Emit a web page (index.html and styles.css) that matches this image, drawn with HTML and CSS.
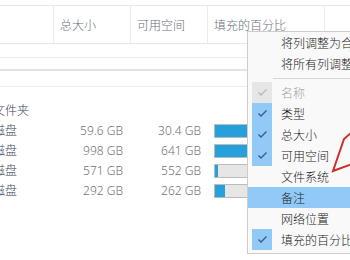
FILE: index.html
```html
<!DOCTYPE html>
<html>
<head>
<meta charset="utf-8">
<link rel="stylesheet" href="styles.css">
</head>
<body>
<div class="page">
  <div class="table">
    <div class="hdr">
      <div class="hc">类型</div>
      <div class="hc">总大小</div>
      <div class="hc">可用空间</div>
      <div class="hc">填充的百分比</div>
      <div class="hc last"></div>
    </div>
    <div class="gap g1"></div>
    <div class="gap g2"></div>
    <div class="gap g3"></div>
    <div class="rows">
      <div class="row"><span class="name">系统文件夹</span><span></span><span></span><span></span></div>
      <div class="row"><span class="name">本地磁盘</span><span class="num">59.6 GB</span><span class="num n2">30.4 GB</span><span class="barcell"><span class="bar"><span class="fill" style="width:94%"></span></span></span></div>
      <div class="row"><span class="name">本地磁盘</span><span class="num">998 GB</span><span class="num n2">641 GB</span><span class="barcell"><span class="bar"><span class="fill" style="width:94%"></span></span></span></div>
      <div class="row"><span class="name">本地磁盘</span><span class="num">571 GB</span><span class="num n2">552 GB</span><span class="barcell"><span class="bar"><span class="fill" style="width:3%"></span></span></span></div>
      <div class="row"><span class="name">本地磁盘</span><span class="num">292 GB</span><span class="num n2">262 GB</span><span class="barcell"><span class="bar"><span class="fill" style="width:10%"></span></span></span></div>
    </div>
  </div>

  <div class="menu">
    <div class="mi"><span class="ck none"></span><span class="mt">将列调整为合适的大小</span></div>
    <div class="mi"><span class="ck none"></span><span class="mt">将所有列调整为合适的大小</span></div>
    <div class="sep"></div>
    <div class="mi dis"><span class="ck gray"><svg width="11" height="9" viewBox="0 0 11 9"><polyline points="1.5,4.5 4,7 9.5,1.5"/></svg></span><span class="mt">名称</span></div>
    <div class="mi"><span class="ck on"><svg width="11" height="9" viewBox="0 0 11 9"><polyline points="1.5,4.5 4,7 9.5,1.5"/></svg></span><span class="mt">类型</span></div>
    <div class="mi"><span class="ck on"><svg width="11" height="9" viewBox="0 0 11 9"><polyline points="1.5,4.5 4,7 9.5,1.5"/></svg></span><span class="mt">总大小</span></div>
    <div class="mi"><span class="ck on"><svg width="11" height="9" viewBox="0 0 11 9"><polyline points="1.5,4.5 4,7 9.5,1.5"/></svg></span><span class="mt">可用空间</span></div>
    <div class="mi"><span class="ck none"></span><span class="mt">文件系统</span></div>
    <div class="mi hl"><span class="ck none"></span><span class="mt">备注</span></div>
    <div class="mi"><span class="ck none"></span><span class="mt">网络位置</span></div>
    <div class="mi"><span class="ck on"><svg width="11" height="9" viewBox="0 0 11 9"><polyline points="1.5,4.5 4,7 9.5,1.5"/></svg></span><span class="mt">填充的百分比</span></div>
  </div>

  <svg class="arrow" width="350" height="260" viewBox="0 0 350 260">
    <polyline points="352,132 344,139 333,171 352,164"/>
  </svg>
</div>
</body>
</html>
```

FILE: styles.css
```css
html, body {
  margin: 0;
  padding: 0;
  background: #ffffff;
  overflow: hidden;
}
.page {
  position: relative;
  width: 350px;
  height: 260px;
  overflow: hidden;
  font-family: "Noto Sans", "Noto Sans CJK SC", sans-serif;
  font-size: 12px;
  font-weight: 300;
}
.table {
  margin-left: -31px;
  width: 381px;
}
.hdr {
  margin-top: 5px;
  height: 37px;
  border-top: 1px solid #e8e8e8;
  border-bottom: 1px solid #e4e7ea;
  display: grid;
  grid-template-columns: 85px 77px 77px 117px 1fr;
}
.hc {
  border-right: 1px solid #ececec;
  padding-left: 6px;
  padding-top: 2px;
  line-height: 35px;
  color: #6a6f78;
  white-space: nowrap;
  overflow: hidden;
}
.hc.last { border-right: none; }
.gap { border-bottom: 1px solid #ebebeb; }
.g1 { height: 13px; }
.g2 { height: 11px; border-bottom: 2px solid #dfe4e8; }
.g3 { height: 15px; border-bottom: 1px solid #eeeeee; }
.rows { margin-top: 14px; }
.row {
  display: grid;
  grid-template-columns: 85px 77px 77px 117px;
  height: 20px;
  line-height: 20px;
  align-items: center;
}
.name {
  color: #3a4458;
  white-space: nowrap;
  overflow: hidden;
}
.num {
  text-align: right;
  padding-right: 8px;
  color: #727272;
}
.num.n2 { padding-right: 7px; }
.barcell {
  padding-left: 6px;
  display: flex;
  align-items: center;
  height: 20px;
}
.bar {
  display: block;
  width: 103px;
  height: 12px;
  border: 1px solid #bcbcbc;
  background: #e6e6e6;
}
.fill {
  display: block;
  height: 100%;
  background: #26a0da;
}

.menu {
  position: absolute;
  left: 247px;
  top: 31px;
  width: 120px;
  background: #f9f9f9;
  border: 1px solid #cdcdcd;
  padding-bottom: 3px;
  color: #1a1a1a;
}
.mi {
  height: 21px;
  display: flex;
  align-items: center;
  white-space: nowrap;
}
.mi.hl { background: #91c9f7; }
.ck {
  width: 20px;
  height: 21px;
  margin-left: 4px;
  display: flex;
  align-items: center;
  justify-content: center;
  flex: none;
}
.ck.on { background: #91c9f7; }
.ck.gray { background: #e6e6e6; }
.ck svg polyline {
  fill: none;
  stroke: #3a5a80;
  stroke-width: 1.3;
}
.ck.gray svg polyline { stroke: #b8b8b8; }
.mt { margin-left: 9px; }
.mi.dis .mt { color: #a2a2a2; }
.sep {
  height: 8px;
  position: relative;
}
.sep::after {
  content: "";
  position: absolute;
  left: 25px;
  right: 0;
  top: 4px;
  height: 1px;
  background: #d6d6d6;
}
.arrow {
  position: absolute;
  left: 0;
  top: 0;
}
.arrow polyline {
  fill: none;
  stroke: #cf2f2a;
  stroke-width: 2;
  stroke-linejoin: miter;
}
```
